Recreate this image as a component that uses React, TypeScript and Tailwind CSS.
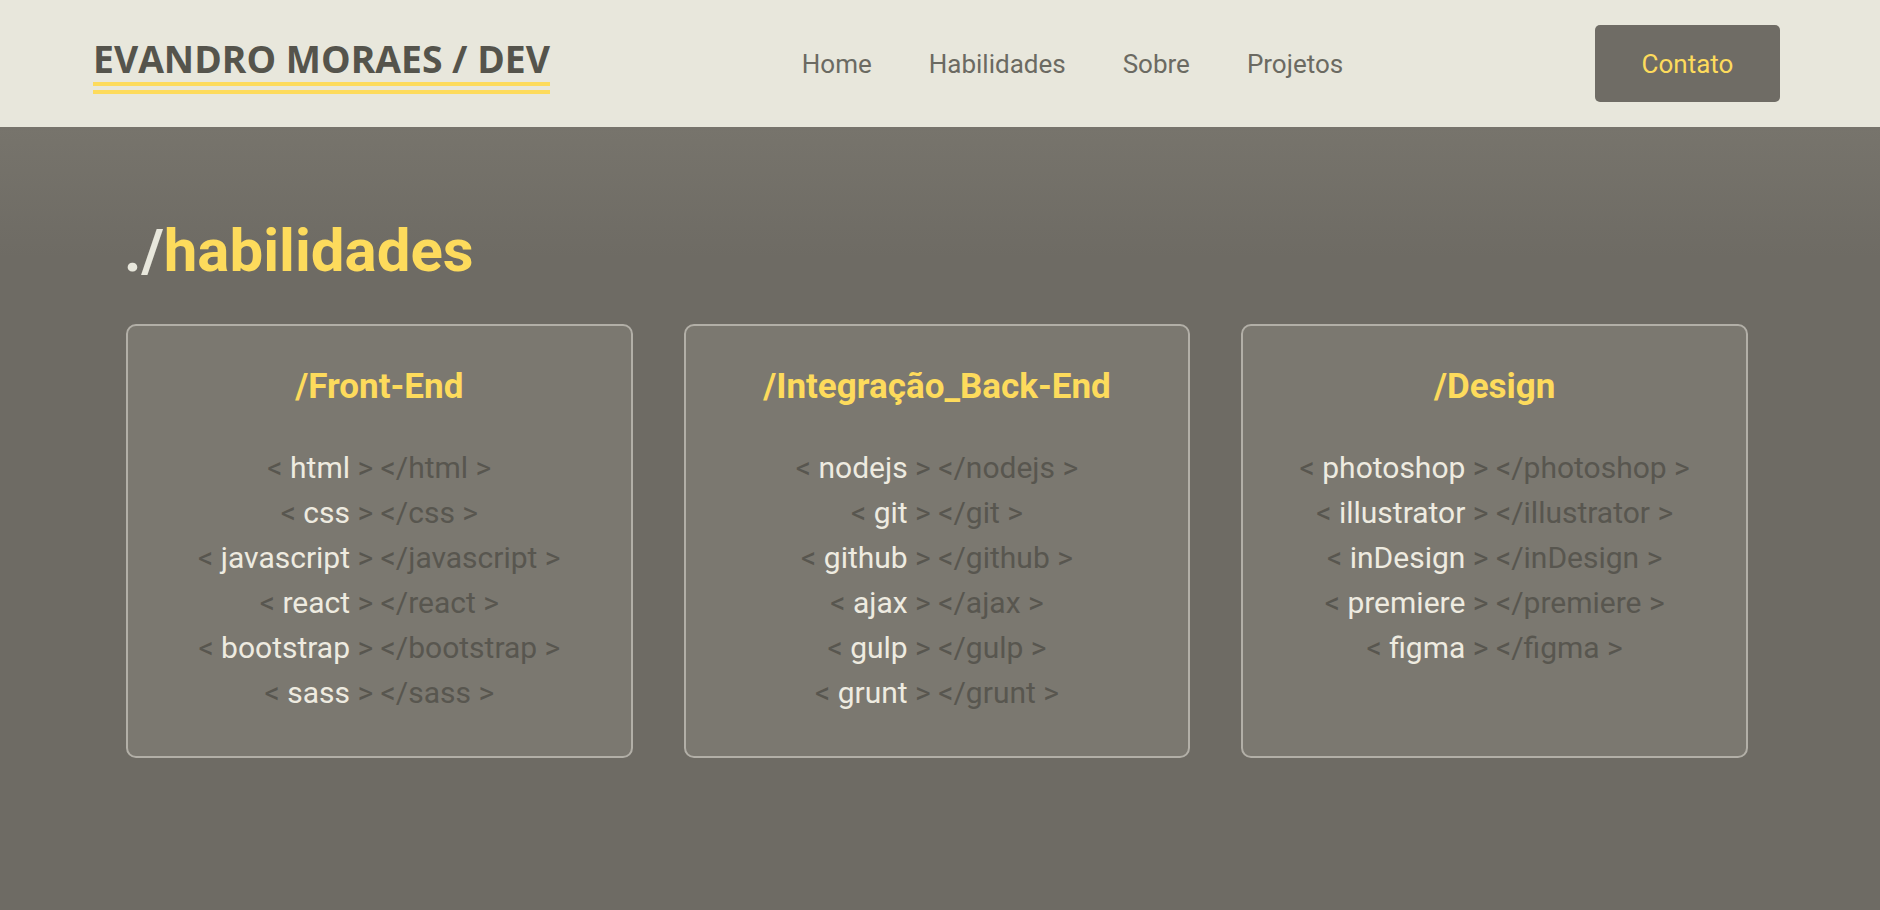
import React from "react";

const cards: { title: string; items: string[] }[] = [
  { title: "/Front-End", items: ["html", "css", "javascript", "react", "bootstrap", "sass"] },
  { title: "/Integração_Back-End", items: ["nodejs", "git", "github", "ajax", "gulp", "grunt"] },
  { title: "/Design", items: ["photoshop", "illustrator", "inDesign", "premiere", "figma"] },
];

function Card({ title, items }: { title: string; items: string[] }) {
  return (
    <div className="rounded-[10px] border-2 border-[#b2afa7] bg-[#7b7870] pt-[37px] pb-[41px]">
      <h3 className="text-center text-[35px] font-bold leading-[48px] text-[#fddb5c] mb-[34px]">{title}</h3>
      <div className="flex justify-center">
        <div className="grid grid-cols-[auto_auto] text-[30px] leading-[45px]">
          {items.map((it) => (
            <React.Fragment key={it}>
              <div className="text-right whitespace-pre">
                <span className="text-[#58564f]">{"< "}</span>
                <span className="text-[#eeebe0]">{it}</span>
              </div>
              <div className="text-left whitespace-pre text-[#58564f]">{` > </${it} >`}</div>
            </React.Fragment>
          ))}
        </div>
      </div>
    </div>
  );
}

export default function App() {
  return (
    <div className="min-h-[910px] w-[1880px] font-['Roboto',sans-serif] bg-[#6e6b64]">
      <header className="h-[127px] bg-[#e8e7dc] flex items-start justify-between pl-[93px] pr-[100px]">
        <div className="mt-[39px] flex flex-col">
          <span className="font-['Open_Sans',sans-serif] font-bold text-[37.3px] leading-[40px] text-[#55544c]">
            EVANDRO MORAES / DEV
          </span>
          <div className="mt-[3px] h-[4px] bg-[#fddb5c]" />
          <div className="mt-[4px] h-[4px] bg-[#fddb5c]" />
        </div>
        <nav className="mt-[49px] flex gap-[57px] text-[26px] leading-[30px] text-[#6b6a62]">
          <a>Home</a>
          <a>Habilidades</a>
          <a>Sobre</a>
          <a>Projetos</a>
        </nav>
        <button className="mt-[25px] flex h-[77px] w-[185px] items-center justify-center rounded-[5px] bg-[#6f6c65] text-[26px] leading-[30px] text-[#fddb5c]">
          Contato
        </button>
      </header>
      <main className="min-h-[783px] bg-[linear-gradient(180deg,#77746c_0px,#6e6b64_130px)] pt-[88px] pl-[126px] pb-[40px]">
        <h2 className="-ml-[2px] text-[60px] font-bold leading-[72px] mb-[37px]">
          <span className="text-[#e8e7dc]">./</span>
          <span className="text-[#fddb5c]">habilidades</span>
        </h2>
        <div className="grid w-[1622px] grid-cols-3 gap-[51px]">
          {cards.map((c) => (
            <Card key={c.title} title={c.title} items={c.items} />
          ))}
        </div>
      </main>
    </div>
  );
}
